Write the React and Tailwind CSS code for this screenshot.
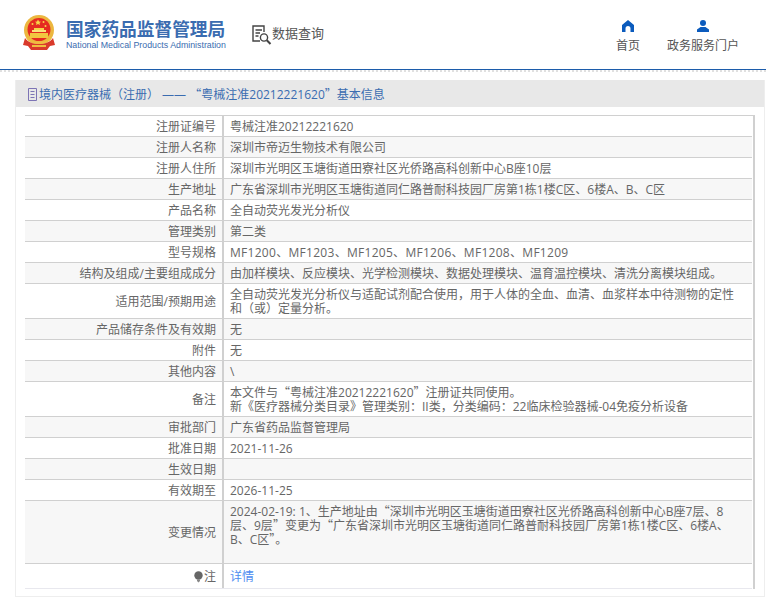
import React from 'react';

const rows = [
  { label: '注册证编号', value: '粤械注准20212221620' },
  { label: '注册人名称', value: '深圳市帝迈生物技术有限公司' },
  { label: '注册人住所', value: '深圳市光明区玉塘街道田寮社区光侨路高科创新中心B座10层' },
  { label: '生产地址', value: '广东省深圳市光明区玉塘街道同仁路普耐科技园厂房第1栋1楼C区、6楼A、B、C区' },
  { label: '产品名称', value: '全自动荧光发光分析仪' },
  { label: '管理类别', value: '第二类' },
  { label: '型号规格', value: 'MF1200、MF1203、MF1205、MF1206、MF1208、MF1209', wide: true },
  { label: '结构及组成/主要组成成分', value: '由加样模块、反应模块、光学检测模块、数据处理模块、温育温控模块、清洗分离模块组成。' },
  { label: '适用范围/预期用途', value: '全自动荧光发光分析仪与适配试剂配合使用，用于人体的全血、血清、血浆样本中待测物的定性和（或）定量分析。' },
  { label: '产品储存条件及有效期', value: '无' },
  { label: '附件', value: '无' },
  { label: '其他内容', value: '\\' },
  { label: '备注', value: '本文件与“粤械注准20212221620”注册证共同使用。\n新《医疗器械分类目录》管理类别：II类，分类编码：22临床检验器械-04免疫分析设备' },
  { label: '审批部门', value: '广东省药品监督管理局' },
  { label: '批准日期', value: '2021-11-26' },
  { label: '生效日期', value: '' },
  { label: '有效期至', value: '2026-11-25' },
  { label: '变更情况', value: '2024-02-19: 1、生产地址由“深圳市光明区玉塘街道田寮社区光侨路高科创新中心B座7层、8层、9层”变更为“广东省深圳市光明区玉塘街道同仁路普耐科技园厂房第1栋1楼C区、6楼A、B、C区”。', tall: true },
];

// curly quotes have to come from the CJK font to get their full width
function Quoted({ text }) {
  return text.split(/([“”])/).map((part, i) =>
    part === '“' || part === '”'
      ? <span key={i} className="font-['Noto_Sans_CJK_SC'] leading-[0]">{part}</span>
      : part
  );
}

function Emblem() {
  return (
    <svg width="32" height="35" viewBox="0 0 32 35">
      <circle cx="16" cy="15" r="15" fill="#ecb73f" />
      <circle cx="16" cy="14.500" r="11.500" fill="#e52b21" />
      <path d="M15 4.500l1 2 2 .2-1.500 1.400.5 2-2-1-2 1 .5-2L12 6.700l2-.2z" fill="#f7d548" />
      <circle cx="9.500" cy="9" r="1" fill="#f7d548" />
      <circle cx="20.500" cy="7" r="1" fill="#f7d548" />
      <circle cx="22.500" cy="11" r="1" fill="#f7d548" />
      <rect x="11" y="13" width="10" height="2" fill="#f7d548" />
      <rect x="9" y="15" width="14" height="2" fill="#f9e27a" />
      <rect x="7" y="18" width="18" height="5" fill="#f2c640" />
      <path d="M2 23c3 4 8 6 14 6s11-2 14-6l2 7-5 1-3 4H8l-3-4-5-1z" fill="#d93a2b" />
      <path d="M4 23c3 4 7 5 12 5s9-1 12-5M9 31h14" fill="none" stroke="#efbd40" strokeWidth="2" />
    </svg>
  );
}

function QueryIcon() {
  return (
    <svg width="20" height="21" viewBox="0 0 20 21" fill="none" stroke="#444" strokeWidth="1.400">
      <path d="M8 16H1V1h11v6" />
      <path d="M3.500 5h6.500M3.500 8h4.500M3.500 11h3" />
      <circle cx="12" cy="12.500" r="3.600" />
      <path d="M14.800 15.300l3.700 3.700" strokeWidth="2" />
    </svg>
  );
}

function HomeIcon() {
  return (
    <svg width="12" height="12" viewBox="0 0 12 12">
      <path d="M6 0l6 5v7H8.500V8.500a2.500 2.500 0 0 0-5 0V12H0V5z" fill="#0b5bbd" />
    </svg>
  );
}

function UserIcon() {
  return (
    <svg width="12" height="12" viewBox="0 0 12 12">
      <circle cx="6" cy="3" r="3" fill="#0b5bbd" />
      <path d="M3.500 7h5L12 9.500V12H0V9.500z" fill="#0b5bbd" />
    </svg>
  );
}

function DocIcon() {
  return (
    <svg width="11" height="13" viewBox="0 0 11 13" fill="none" stroke="#7d74b5" strokeWidth="1">
      <path d="M1.500.500h8v12h-8z" />
      <path d="M3.500 3.500h4M3.500 6.500h4M3.500 9.500h4" />
    </svg>
  );
}

function BulbIcon() {
  return (
    <svg width="9" height="12" viewBox="0 0 9 12" className="mr-[1px]">
      <circle cx="4.500" cy="4.500" r="4.200" fill="#666" />
      <path d="M3 8.500h3v1.500L4.500 11.500 3 10z" fill="#888" />
    </svg>
  );
}

function HeaderLink({ icon, text }) {
  return (
    <div className="flex flex-col items-center">
      <div className="h-[12px]">{icon}</div>
      <span className="text-[12px] leading-[18px] text-[#555] mt-[5px]">{text}</span>
    </div>
  );
}

function InfoRow({ label, children, shaded, tall, last, wide }) {
  return (
    <div className={`flex border-b ${last ? 'border-[#e8e8ee]' : 'border-[#d0d0d0]'} ${shaded ? 'bg-[#f7f7f7]' : 'bg-white'}`}>
      <div className="w-[199px] shrink-0 flex items-center justify-end pr-[6px] pt-[1px] border-r-2 border-[#d0d0d0]">{label}</div>
      <div className={`flex-1 pl-[6px] pr-[8px] leading-[14px] pt-[4px] pb-[2px] ${tall ? 'min-h-[62px]' : 'min-h-[20px]'} ${wide ? 'tracking-[0.29px]' : ''}`}>{children}</div>
    </div>
  );
}

export default function App() {
  return (
    <div className="w-[766px] h-[605px] bg-white overflow-hidden text-[12px] text-[#666] font-['Open_Sans','Noto_Sans_CJK_SC',sans-serif]">
      <header className="h-[70px] flex border-b border-[#1c5cab] pl-[23px]">
        <div className="pt-[15px]"><Emblem /></div>
        <div className="ml-[11px] pt-[17px]">
          <div className="text-[17.700px] leading-[22px] font-bold text-[#3a6cb0] font-['Noto_Sans_CJK_SC']">国家药品监督管理局</div>
          <div className="text-[8.800px] leading-[12px] text-[#3a6cb0] font-['Liberation_Sans']">National Medical Products Administration</div>
        </div>
        <div className="ml-[26px] pt-[25px] flex items-start">
          <QueryIcon />
          <span className="text-[13px] leading-[16px] text-[#555]">数据查询</span>
        </div>
        <div className="ml-auto flex pt-[20px] pr-[27px] gap-[27px]">
          <HeaderLink icon={<HomeIcon />} text="首页" />
          <HeaderLink icon={<UserIcon />} text="政务服务门户" />
        </div>
      </header>
      <div className="h-[2px] border-b-2 border-dotted border-[#e0e0e0]" />
      <div className="h-[8px]" />
      <main className="ml-[15px] w-[750px] border border-t-0 border-[#eeeeee]">
        <div className="h-[27px] bg-[#e8e8e8] pl-[11px] pt-[2px] flex items-center gap-[1px] text-[#3a6cb0]">
          <DocIcon />
          <span><Quoted text="境内医疗器械（注册） —— “粤械注准20212221620”基本信息" /></span>
        </div>
        <div className="pl-[9px] pr-[9px] pt-[8px] pb-[7px]">
          <div className="border-t border-[#d0d0d0] border-r-2 pr-[1px]">
            {rows.map((r, i) => (
              <InfoRow key={r.label} label={r.label} shaded={i % 2 === 1} tall={r.tall} wide={r.wide}>
                {r.value.split('\n').map((l) => <div key={l}><Quoted text={l} /></div>)}
              </InfoRow>
            ))}
            <InfoRow last label={<span className="flex items-center"><BulbIcon />注</span>}>
              <span className="text-[#4f8df0] leading-[18px] block">详情</span>
            </InfoRow>
          </div>
        </div>
      </main>
    </div>
  );
}
